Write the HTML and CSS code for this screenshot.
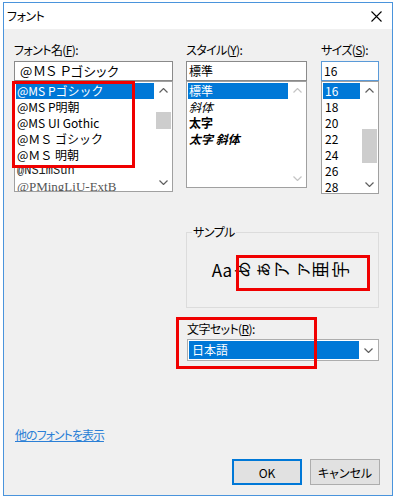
FILE: index.html
```html
<html>
  <head>
    <link rel="stylesheet" href="styles.css">
  </head>
  <body>
    <div class="dialog">
      <div class="titlebar">
        <span class="title">フォント</span>
        <svg class="close" width="11" height="11" viewBox="0 0 11 11"><path d="M0.5 0.5L10.5 10.5M10.5 0.5L0.5 10.5" stroke="#000" stroke-width="1.1" fill="none"/></svg>
      </div>

      <div class="body">
        <div class="pickers">
          <div class="col col-name">
            <div class="label">フォント名(<u>F</u>):</div>
            <div class="edit edit-name">@ＭＳ Ｐゴシック</div>
            <div class="listbox list-name">
              <div class="items">
                <div class="row selected">@MS Pゴシック</div>
                <div class="row">@MS P明朝</div>
                <div class="row">@MS UI Gothic</div>
                <div class="row">@ＭＳ ゴシック</div>
                <div class="row">@ＭＳ 明朝</div>
                <div class="row mono">@NSimSun</div>
                <div class="row serif">@PMingLiU-ExtB</div>
              </div>
              <div class="sbar">
                <span class="arrow"><svg width="9" height="5" viewBox="0 0 9 5"><polyline points="0.5,4.5 4.5,0.5 8.5,4.5" fill="none" stroke="#606060" stroke-width="1.2"/></svg></span>
                <span class="track"><span class="thumb thumb-name"></span></span>
                <span class="arrow"><svg width="9" height="5" viewBox="0 0 9 5"><polyline points="0.5,0.5 4.5,4.5 8.5,0.5" fill="none" stroke="#606060" stroke-width="1.2"/></svg></span>
              </div>
            </div>
          </div>

          <div class="col col-style">
            <div class="label">スタイル(<u>Y</u>):</div>
            <div class="edit edit-style">標準</div>
            <div class="listbox list-style">
              <div class="items">
                <div class="row selected">標準</div>
                <div class="row italic">斜体</div>
                <div class="row bold">太字</div>
                <div class="row bold italic">太字 斜体</div>
              </div>
              <div class="sbar">
                <span class="arrow"><svg width="9" height="5" viewBox="0 0 9 5"><polyline points="0.5,4.5 4.5,0.5 8.5,4.5" fill="none" stroke="#c4c4c4" stroke-width="1.2"/></svg></span>
                <span class="track"></span>
                <span class="arrow"><svg width="9" height="5" viewBox="0 0 9 5"><polyline points="0.5,0.5 4.5,4.5 8.5,0.5" fill="none" stroke="#c4c4c4" stroke-width="1.2"/></svg></span>
              </div>
            </div>
          </div>

          <div class="col col-size">
            <div class="label">サイズ(<u>S</u>):</div>
            <div class="edit edit-size">16</div>
            <div class="listbox list-size">
              <div class="items">
                <div class="row selected">16</div>
                <div class="row">18</div>
                <div class="row">20</div>
                <div class="row">22</div>
                <div class="row">24</div>
                <div class="row">26</div>
                <div class="row">28</div>
              </div>
              <div class="sbar">
                <span class="arrow"><svg width="9" height="5" viewBox="0 0 9 5"><polyline points="0.5,4.5 4.5,0.5 8.5,4.5" fill="none" stroke="#606060" stroke-width="1.2"/></svg></span>
                <span class="track"><span class="thumb thumb-size"></span></span>
                <span class="arrow"><svg width="9" height="5" viewBox="0 0 9 5"><polyline points="0.5,0.5 4.5,4.5 8.5,0.5" fill="none" stroke="#606060" stroke-width="1.2"/></svg></span>
              </div>
            </div>
          </div>
        </div>

        <div class="lower">
          <fieldset class="sample">
            <legend>サンプル</legend>
            <div class="sample-text">Aa<span class="rot">あ</span><span class="rot">ぁ</span><span class="rot">ア</span><span class="rot">ァ</span><span class="rot">亜</span><span class="rot">宇</span></div>
          </fieldset>
          <div class="label charset-label">文字セット(<u>R</u>):</div>
          <div class="combo">
            <span class="combo-value">日本語</span>
            <span class="combo-arrow"><svg width="9" height="5" viewBox="0 0 9 5"><polyline points="0.5,0.5 4.5,4.5 8.5,0.5" fill="none" stroke="#606060" stroke-width="1.2"/></svg></span>
          </div>
        </div>

        <a class="more">他のフォントを表示</a>

        <div class="buttons">
          <button class="btn btn-ok">OK</button>
          <button class="btn">キャンセル</button>
        </div>
      </div>

      <div class="mark mark-list"></div>
      <div class="mark mark-sample"></div>
      <div class="mark mark-charset"></div>
    </div>
  </body>
</html>
```

FILE: styles.css
```css
body { margin: 0; background: #fff; font: 12px "Noto Sans CJK JP", sans-serif; font-feature-settings: "palt"; color: #000; }
u { text-decoration: underline; text-underline-offset: 1px; }

.dialog { position: relative; margin: 2px 0 0 3px; width: 390px; height: 494px; box-sizing: border-box; border: 1px solid #4a94dc; background: #f0f0f0; display: flex; flex-direction: column; }
.titlebar { height: 26px; flex: none; background: #fff; display: flex; align-items: center; justify-content: space-between; padding: 0 10px 0 3px; }
.title { line-height: 16px; letter-spacing: -0.5px; }

.body { flex: 1; padding: 14px 13px 0 10px; }
.pickers { display: flex; align-items: flex-start; }
.col-name { width: 159px; margin-right: 13px; }
.col-style { width: 121px; margin-right: 14px; }
.col-size { width: 58px; }

.label { height: 14px; line-height: 14px; margin-bottom: 4px; letter-spacing: -0.6px; white-space: nowrap; }
.edit { height: 20px; box-sizing: border-box; border: 1px solid #8a8a8a; background: #fff; line-height: 18px; padding: 0 2px; white-space: nowrap; overflow: hidden; }
.edit-name { padding-left: 5px; font-size: 13px; letter-spacing: 0.6px; }
.edit-size { border-color: #5a9ad8; }

.listbox { display: flex; box-sizing: border-box; border: 1px solid #a0a0a0; background: #fff; overflow: hidden; }
.list-name { height: 111px; }
.list-style { height: 107px; }
.list-size { height: 113px; }
.items { flex: 1; padding: 1px 1px 0 1px; overflow: hidden; }
.row { height: 16px; line-height: 16px; padding-left: 1px; white-space: nowrap; overflow: hidden; }
.list-name .row { font-feature-settings: normal; }
.row.selected { background: #0078d7; color: #fff; }
.row.italic { font-style: italic; }
.row.bold { font-weight: bold; }
.row.mono { font-family: "Liberation Mono", monospace; font-size: 12px; color: #222; }
.row.serif { font-family: "Liberation Serif", serif; font-size: 13px; color: #555; }
.list-size .row { padding-left: 2px; }

.sbar { width: 17px; flex: none; display: flex; flex-direction: column; background: #fff; }
.arrow { height: 17px; flex: none; display: flex; align-items: center; justify-content: center; }
.track { flex: 1; display: flex; flex-direction: column; align-items: center; }
.thumb { width: 15px; background: #cdcdcd; }
.thumb-name { margin-top: 13px; height: 17px; }
.thumb-size { margin-top: 30px; height: 34px; }

.lower { margin: 31px 0 0 172px; width: 193px; }
.sample { margin: 0; padding: 0; height: 83px; box-sizing: border-box; border: 1px solid #dcdcdc; min-width: 0; }
.sample legend { margin-left: 5px; padding: 0 1px; line-height: 14px; letter-spacing: -0.5px; }
.sample-text { height: 60px; display: flex; align-items: center; justify-content: center; font-size: 17px; padding-right: 4px; }
.rot { display: inline-block; transform: rotate(-90deg); width: 19.5px; text-align: center; }

.charset-label { margin-top: 14px; margin-left: 1px; margin-bottom: 3px; }
.combo { margin-left: 1px; height: 22px; box-sizing: border-box; border: 1px solid #adadad; background: #fff; padding: 1px; display: flex; }
.combo-value { flex: 1; background: #0078d7; color: #fff; line-height: 18px; padding-left: 3px; }
.combo-arrow { width: 18px; display: flex; align-items: center; justify-content: center; }

.more { display: inline-block; margin: 67px 0 0 1px; color: #2b7fd6; text-decoration: underline; line-height: 14px; letter-spacing: -1px; }

.buttons { display: flex; justify-content: flex-end; gap: 8px; margin: 17px -1px 0 0; }
.btn { width: 70px; height: 26px; box-sizing: border-box; border: 1px solid #adadad; background: #e1e1e1; font: 12px "Noto Sans CJK JP", sans-serif; font-feature-settings: "palt"; color: #000; padding: 0; }
.btn-ok { border: 2px solid #0078d7; }

.mark { position: absolute; border: 3px solid #f00000; box-sizing: border-box; }
.mark-list { left: 8px; top: 78px; width: 123px; height: 87px; }
.mark-sample { left: 232px; top: 252px; width: 134px; height: 36px; }
.mark-charset { left: 172px; top: 314px; width: 141px; height: 52px; }
```
